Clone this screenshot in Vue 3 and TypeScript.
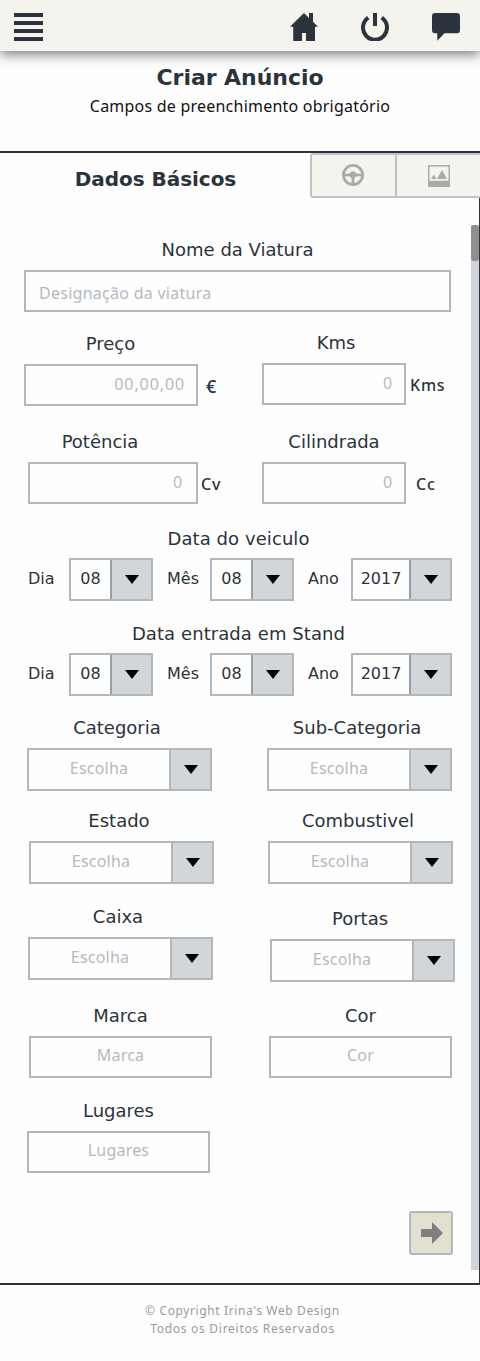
<script setup lang="ts">
interface Field {
  label: string
  hint: string
  name: string
  kind: 'select' | 'number' | 'text'
  unit?: string
}

const rows: { name: string; fields: Field[] }[] = [
  { name: 'price', fields: [
    { label: 'Preço', hint: '00,00,00', name: 'preco', kind: 'number', unit: '€' },
    { label: 'Kms', hint: '0', name: 'kms', kind: 'number', unit: 'Kms' },
  ] },
  { name: 'power', fields: [
    { label: 'Potência', hint: '0', name: 'potencia', kind: 'number', unit: 'Cv' },
    { label: 'Cilindrada', hint: '0', name: 'cilindrada', kind: 'number', unit: 'Cc' },
  ] },
]

const dates = [
  { name: 'vehicle', label: 'Data do veiculo' },
  { name: 'stand', label: 'Data entrada em Stand' },
]
const dateParts = [
  { label: 'Dia', value: '08', name: 'day' },
  { label: 'Mês', value: '08', name: 'month' },
  { label: 'Ano', value: '2017', name: 'year' },
]

const choices: { name: string; fields: Field[] }[] = [
  { name: 'category', fields: [
    { label: 'Categoria', hint: 'Escolha', name: 'categoria', kind: 'select' },
    { label: 'Sub-Categoria', hint: 'Escolha', name: 'subcategoria', kind: 'select' },
  ] },
  { name: 'state', fields: [
    { label: 'Estado', hint: 'Escolha', name: 'estado', kind: 'select' },
    { label: 'Combustivel', hint: 'Escolha', name: 'combustivel', kind: 'select' },
  ] },
  { name: 'gearbox', fields: [
    { label: 'Caixa', hint: 'Escolha', name: 'caixa', kind: 'select' },
    { label: 'Portas', hint: 'Escolha', name: 'portas', kind: 'select' },
  ] },
  { name: 'brand', fields: [
    { label: 'Marca', hint: 'Marca', name: 'marca', kind: 'text' },
    { label: 'Cor', hint: 'Cor', name: 'cor', kind: 'text' },
  ] },
  { name: 'seats', fields: [
    { label: 'Lugares', hint: 'Lugares', name: 'lugares', kind: 'text' },
  ] },
]
</script>

<template>
  <div class="page">
    <header class="topbar">
      <svg class="menu" width="29" height="28" viewBox="0 0 29 28"><path d="M0 0h29v4H0zM0 8h29v4H0zM0 16h29v4H0zM0 24h29v4H0z" /></svg>
      <nav class="actions">
        <svg width="28" height="28" viewBox="0 0 28 28"><path d="M14 0L19 4.900V0h4v8.800L28 13.700H25V28H16V20H12V28H3.200V13.700H0Z" /></svg>
        <svg width="28" height="28" viewBox="0 0 28 28"><path d="M12 0h4v13h-4z" /><path class="ring" d="M7.300 4.700A12 12 0 1 0 20.700 4.700" /></svg>
        <svg width="28" height="28" viewBox="0 0 28 28"><path d="M3 0H25Q28 0 28 3V17Q28 20.300 25 20.300H12.500L5.300 27.700V20.300H3Q0 20.300 0 17V3Q0 0 3 0Z" /></svg>
      </nav>
    </header>

    <div class="intro">
      <h1>Criar Anúncio</h1>
      <p>Campos de preenchimento obrigatório</p>
    </div>

    <main class="panel">
      <div class="tabs">
        <h2>Dados Básicos</h2>
        <div class="tab first">
          <svg width="22" height="22" viewBox="0 0 22 22"><circle class="wheel" cx="11" cy="11" r="9.600" /><path d="M2 9.700H7L9 8Q11 6.500 13 8L15 9.700H20V12.300H15Q12.300 13 12.300 16V20H9.700V16Q9.700 13 7 12.300H2Z" /></svg>
        </div>
        <div class="tab second">
          <svg width="22" height="22" viewBox="0 0 22 22"><path fill-rule="evenodd" d="M0 0H22V22H0ZM1.500 1.500V15.700H20.500V1.500Z" /><path d="M3 14L6 9.500L8.500 14ZM9 14L14 5L19 14Z" /></svg>
        </div>
      </div>

      <div class="content">
        <form class="form" @submit.prevent>
          <div class="field full">
            <span class="label">Nome da Viatura</span>
            <div class="box"><span class="hint">Designação da viatura</span></div>
          </div>

          <div v-for="row in rows" :key="row.name" class="row" :class="row.name">
            <div v-for="f in row.fields" :key="f.name" class="field" :class="f.name">
              <span class="label">{{ f.label }}</span>
              <div class="measure">
                <div class="box number"><span class="hint">{{ f.hint }}</span></div>
                <span class="unit">{{ f.unit }}</span>
              </div>
            </div>
          </div>

          <div v-for="d in dates" :key="d.name" class="date" :class="d.name">
            <span class="label">{{ d.label }}</span>
            <div class="parts">
              <template v-for="p in dateParts" :key="p.name">
                <span class="part" :class="p.name">{{ p.label }}</span>
                <div class="select small" :class="p.name">
                  <span class="value">{{ p.value }}</span>
                  <span class="drop"><svg width="14" height="9" viewBox="0 0 14 9"><path d="M0 0H14L7 9Z" /></svg></span>
                </div>
              </template>
            </div>
          </div>

          <div v-for="row in choices" :key="row.name" class="row" :class="row.name">
            <div v-for="f in row.fields" :key="f.name" class="field" :class="[f.name, f.kind]">
              <span class="label">{{ f.label }}</span>
              <div v-if="f.kind === 'select'" class="select">
                <span class="hint">{{ f.hint }}</span>
                <span class="drop"><svg width="14" height="9" viewBox="0 0 14 9"><path d="M0 0H14L7 9Z" /></svg></span>
              </div>
              <div v-else class="box centered"><span class="hint">{{ f.hint }}</span></div>
            </div>
          </div>

          <button class="next" type="button" aria-label="Seguinte">
            <svg width="22" height="22" viewBox="0 0 22 22"><path d="M0 7H11V0L22 11L11 22V15H0Z" /></svg>
          </button>
        </form>
        <div class="track"><div class="thumb"></div></div>
      </div>
    </main>

    <footer>
      <p>© Copyright Irina's Web Design</p>
      <p class="rights">Todos os Direitos Reservados</p>
    </footer>
  </div>
</template>

<style>
body { margin: 0; background: #fefefe; }
</style>

<style scoped>
* { box-sizing: border-box; }
.page { width: 480px; height: 1361px; overflow: hidden; background: #fefefe; color: #2b333b; font-family: "DejaVu Sans", sans-serif; display: flex; flex-direction: column; }
h1, h2, p { margin: 0; }
svg { display: block; flex: none; }

.topbar { height: 51px; flex: none; display: flex; justify-content: space-between; align-items: flex-start; padding: 13px 20px 0 14px; background: #f5f3ed; box-shadow: 0 3px 12px rgba(0, 0, 0, .55); fill: #2b343c; }
.actions { display: flex; gap: 43px; }
.ring { fill: none; stroke: #2b343c; stroke-width: 4; }

.intro { height: 100px; flex: none; text-align: center; }
h1 { padding-top: 13px; font-size: 22px; line-height: 28px; letter-spacing: -.05px; }
.intro p { margin-top: 3px; font: 16px/22px "Noto Sans", sans-serif; letter-spacing: .22px; color: #111; }

.panel { height: 1134px; flex: none; border: solid #2b343c; border-width: 2px 1px 2px 0; display: flex; flex-direction: column; }
.tabs { height: 72px; flex: none; display: flex; align-items: flex-start; }
h2 { width: 310px; flex: none; padding: 13px 0 0 1px; font-size: 20px; line-height: 26px; letter-spacing: -.05px; text-align: center; }
.tab { height: 45px; flex: none; border: 2px solid #c0c2c4; background: #f5f3ed; display: flex; align-items: flex-start; justify-content: center; padding-top: 9px; fill: #a9aaaa; }
.tab.first { width: 87px; border-radius: 3px 0 0 3px; border-right-width: 2px; padding-right: 2px; }
.tab.second { width: 83px; margin-right: -1px; border-width: 2px 0; padding: 10px 0 0; }
.wheel { fill: none; stroke: #a9aaaa; stroke-width: 2.8; }

.content { display: flex; align-items: flex-start; }
.form { width: 471px; display: flex; flex-direction: column; padding-top: 12px; }
.track { width: 8px; height: 1045px; background: #d0d4d7; }
.thumb { height: 36px; border-radius: 3px; background: #8e8f91; }

.label { display: block; height: 32px; padding-top: 1px; margin-bottom: 1px; font-size: 18px; line-height: 24px; text-align: center; white-space: nowrap; }
.box { height: 42px; border: 2px solid #b0b7bd; display: flex; align-items: flex-start; }
.hint { font: 16px/24px "Noto Sans", sans-serif; color: #b3babf; padding-top: 6px; letter-spacing: .2px; white-space: nowrap; }
.full { width: 427px; margin-left: 24px; }
.full .hint { padding: 9px 0 0 13px; letter-spacing: .27px; }

.row { display: flex; align-items: flex-start; }
.row > .field:first-child { width: 240px; flex: none; }
.measure { display: flex; }
.number { justify-content: flex-end; flex: none; }
.number .hint { letter-spacing: .9px; padding-right: 11px; }
.unit { font: 500 16px/24px "Noto Sans", sans-serif; padding-top: 10px; letter-spacing: .8px; }

.price { margin-top: 18px; height: 76px; }
.preco { padding: 1px 0 0 24px; }
.preco .label { width: 173px; }
.preco .box { width: 174px; }
.preco .unit { padding-left: 8px; font-size: 18px; }
.kms { padding-left: 22px; }
.kms .label { width: 148px; }
.kms .box, .cilindrada .box { width: 144px; }
.kms .unit { padding-left: 4px; }
.power { margin-top: 23px; height: 75px; }
.potencia { padding-left: 28px; }
.potencia .label { width: 144px; }
.potencia .box { width: 170px; }
.potencia .hint { padding-right: 13px; }
.potencia .unit { padding-left: 3px; }
.cilindrada { padding-left: 22px; }
.cilindrada .label { width: 144px; }
.cilindrada .unit { padding-left: 10px; }

.date { height: 76px; padding-left: 28px; }
.date .label { width: 421px; padding-top: 2px; letter-spacing: .08px; }
.vehicle { margin-top: 21px; }
.stand { margin-top: 19px; }
.parts { display: flex; }
.part { width: 41px; font-size: 16px; line-height: 24px; padding-top: 9px; }
.part.month, .part.year { width: 57px; padding-left: 14px; }

.select { width: 185px; height: 43px; border: 2px solid #b0b7bd; display: flex; }
.select > .hint, .value { flex: 1; text-align: center; }
.value { font-size: 16px; line-height: 24px; padding-top: 7px; }
.drop { width: 41px; flex: none; border-left: 2px solid #b0b7bd; background: #d2d6d9; display: flex; align-items: flex-start; justify-content: center; padding-top: 15px; }
.small { width: 84px; }
.small.year { width: 101px; }
.small .drop { border-left-color: #929ea8; }

.field.select { display: block; width: auto; height: auto; border: 0; }
.row > .field.select:first-child { width: 240px; }
.field.select .label { width: 180px; }
.category, .state { height: 76px; }
.category { margin-top: 19px; }
.state { margin-top: 17px; }
.gearbox { margin-top: 20px; height: 78px; }
.brand { margin-top: 21px; height: 75px; }
.seats { margin-top: 20px; height: 75px; }
.row > .categoria, .row > .subcategoria { padding-left: 27px; }
.row > .estado { padding-left: 29px; }
.row > .combustivel, .row > .caixa { padding-left: 28px; }
.row > .portas { padding: 2px 0 0 30px; }
.row > .marca, .row > .cor { padding-left: 29px; }
.row > .lugares { padding-left: 27px; }
.text .label, .text .box { width: 183px; }
.centered { justify-content: center; }
.centered .hint { padding-top: 5px; }

.next { width: 44px; height: 44px; margin: 38px 0 0 409px; padding: 0 0 0 1px; border: 2px solid #b4b8ba; border-radius: 3px; background: #e4e0d0; display: flex; align-items: center; justify-content: center; fill: #7d807e; }

footer { padding: 17px 0 0 5px; text-align: center; font: 12px/18px "Noto Sans", sans-serif; color: #959ba0; letter-spacing: .62px; }
.rights { letter-spacing: .72px; }
</style>
